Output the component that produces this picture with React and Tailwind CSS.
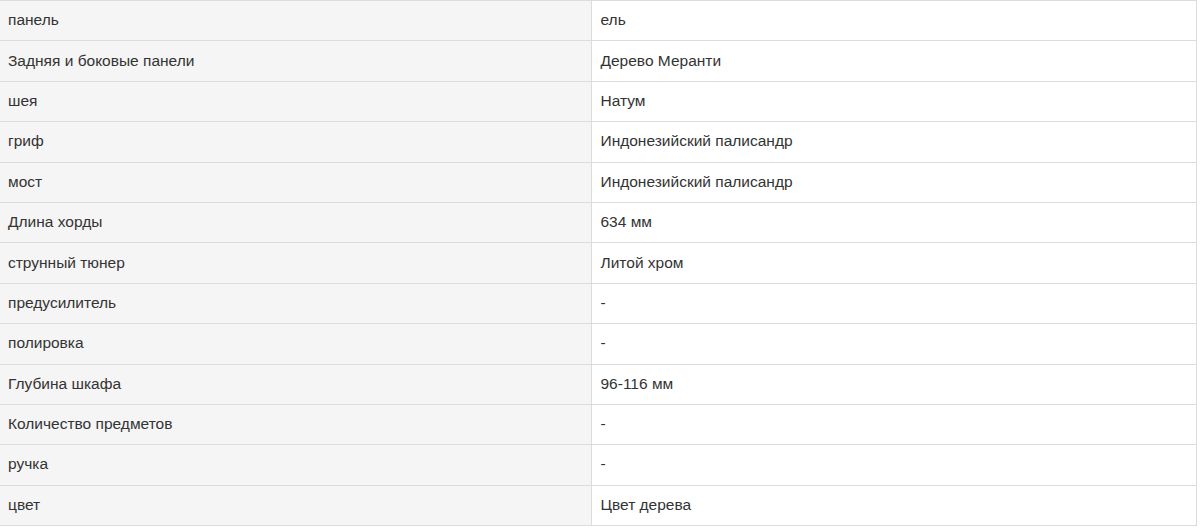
const specs = [
  ["панель", "ель"],
  ["Задняя и боковые панели", "Дерево Меранти"],
  ["шея", "Натум"],
  ["гриф", "Индонезийский палисандр"],
  ["мост", "Индонезийский палисандр"],
  ["Длина хорды", "634 мм"],
  ["струнный тюнер", "Литой хром"],
  ["предусилитель", "-"],
  ["полировка", "-"],
  ["Глубина шкафа", "96-116 мм"],
  ["Количество предметов", "-"],
  ["ручка", "-"],
  ["цвет", "Цвет дерева"],
];

export default function App() {
  return (
    <div className="w-[1200px] h-[528px] bg-white font-['Liberation_Sans',Arial,sans-serif] text-[15.5px] text-[#333]">
      <table className="w-[1197px] border-collapse border-t border-r border-[#dcdcdc]">
        <tbody>
          {specs.map(([label, value]) => (
            <tr key={label} className="h-[40.4px] border-b border-[#dcdcdc]">
              <td className="w-[591px] bg-[#f5f5f5] px-2 pb-[2px] align-middle leading-[23px]">{label}</td>
              <td className="border-l border-[#dcdcdc] px-[9px] pb-[2px] align-middle leading-[23px]">{value}</td>
            </tr>
          ))}
        </tbody>
      </table>
    </div>
  );
}
